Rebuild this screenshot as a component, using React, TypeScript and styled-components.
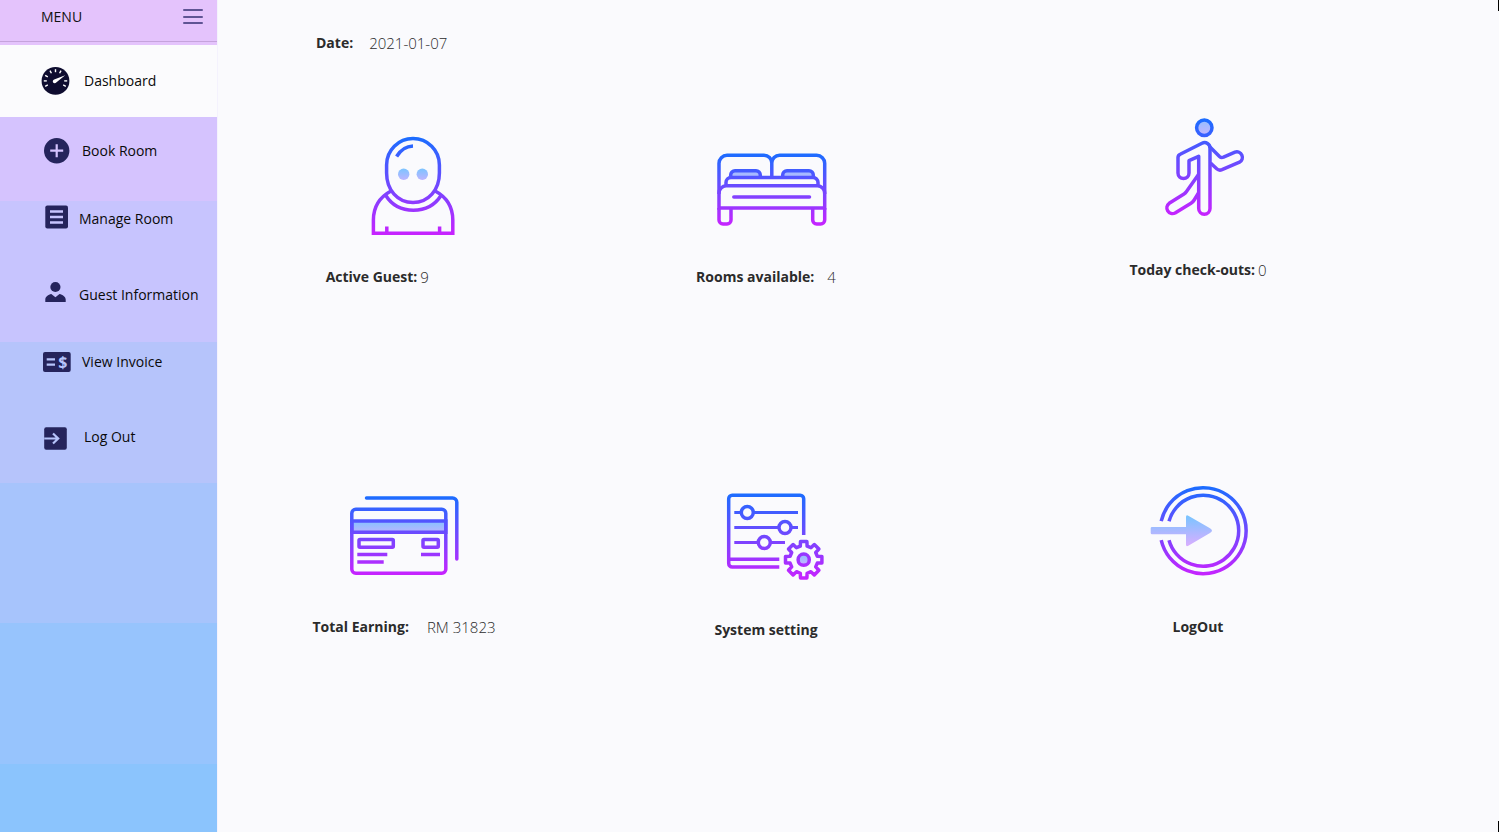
import React from "react";
import styled, { createGlobalStyle } from "styled-components";

const GlobalStyle = createGlobalStyle`
  * { box-sizing: border-box; }
  body {
    margin: 0;
    background: #fafafd;
    font-family: "Segoe UI", "Open Sans", "Noto Sans", sans-serif;
    font-size: 14px;
    line-height: 20px;
    color: #2b2b2b;
  }
`;

const Page = styled.div`
  display: flex;
  min-height: 100vh;
`;

const Sidebar = styled.aside`
  flex: 0 0 218px;
  border-right: 1px solid #f4f2fd;
  background: linear-gradient(
    #e4c3fc 0 60px,
    #d5c3fe 60px 201px,
    #c7c4fe 201px 342px,
    #b6c4fb 342px 483px,
    #a7c4fc 483px 623px,
    #97c4fd 623px 764px,
    #8bc4fd 764px
  );
`;

const SidebarHeader = styled.div`
  display: flex;
  align-items: center;
  justify-content: space-between;
  height: 42px;
  margin-bottom: 3px;
  padding: 0 14px 8px 41px;
  border-bottom: 1px solid #c5a3dc;
  color: #111;
`;

const MenuButton = styled.button`
  display: flex;
  flex-direction: column;
  justify-content: space-between;
  width: 20px;
  height: 15px;
  padding: 0;
  border: 0;
  background: none;
  cursor: pointer;
`;

const MenuLine = styled.span`
  height: 2px;
  border-radius: 1px;
  background: #5f5494;
`;

const NavList = styled.ul`
  margin: 0;
  padding: 0;
  list-style: none;
`;

const NavItem = styled.li<{ $active?: boolean; $space?: number }>`
  margin-top: ${(p) => p.$space ?? 0}px;
  padding: ${(p) => (p.$active ? "22px 0" : "0")};
  background: ${(p) => (p.$active ? "#fbfbfd" : "transparent")};
`;

const NavLink = styled.a<{ $gap: number }>`
  display: flex;
  align-items: center;
  gap: ${(p) => p.$gap}px;
  height: 28px;
  padding-left: 41px;
  color: #0a0a0a;
  text-decoration: none;
  white-space: nowrap;
`;

const NavIcon = styled.svg`
  flex: none;
  width: 30px;
  height: 28px;
  fill: #25245c;
`;

const Main = styled.main`
  position: relative;
  flex: 1;
  min-width: 0;
  padding: 33px 50px 0 5px;

  &::before,
  &::after {
    content: "";
    position: absolute;
    right: 0;
    width: 1px;
    height: 11px;
    background: #000;
  }
  &::before { top: 0; }
  &::after { bottom: 0; }
`;

const DateLine = styled.p`
  display: flex;
  gap: 16px;
  margin: 0 0 57px;
  padding-left: 93px;
`;

const Cards = styled.div`
  display: grid;
  grid-template-columns: 362fr 362fr 502fr;
  grid-template-rows: 370px auto;
`;

const Card = styled.section`
  display: flex;
  flex-direction: column;
  align-items: center;
`;

const Art = styled.svg`
  display: block;
  width: 124px;
  margin-bottom: 26px;
  fill: none;
  stroke-width: 3.5;
`;

const Caption = styled.div<{ $gap?: number }>`
  display: flex;
  gap: ${(p) => p.$gap ?? 0}px;
  white-space: nowrap;
`;

const Label = styled.span`
  font-weight: 700;
`;

const Value = styled.span<{ $reserve?: number }>`
  min-width: ${(p) => p.$reserve ?? 0}px;
  color: #2b2b2b;
  font-size: 15px;
  font-weight: 300;
`;

const PlainLink = styled.a`
  color: inherit;
  font-weight: 700;
  text-decoration: none;
`;

function Gradients({ id, top, bottom, tintTop, tintBottom }: {
  id: string; top: number; bottom: number; tintTop: number; tintBottom: number;
}) {
  return (
    <defs>
      <linearGradient id={`${id}-line`} gradientUnits="userSpaceOnUse" x1="0" x2="0" y1={top} y2={bottom}>
        <stop offset="0" stopColor="#1a6dff" />
        <stop offset="1" stopColor="#c822ff" />
      </linearGradient>
      <linearGradient id={`${id}-tint`} gradientUnits="userSpaceOnUse" x1="0" x2="0" y1={tintTop} y2={tintBottom}>
        <stop offset="0" stopColor="#6dc7ff" />
        <stop offset="1" stopColor="#e6abff" />
      </linearGradient>
    </defs>
  );
}

function GuestArt() {
  return (
    <Art viewBox="0 0 124 131" height="131" stroke="url(#guest-line)" aria-hidden="true">
      <Gradients id="guest" top={27} bottom={125} tintTop={56} tintBottom={77} />
      <path d="M44.600 55a26.400 26.400 0 0 1 52.800 0v8c0 17-11 29.600-26.400 29.600S44.600 80 44.600 63z" />
      <path d="M54.600 46.500C58.600 40 63.600 36.300 71 36" />
      <path d="M49 81c-11 6-17.600 16-17.600 29v13.300h79.400V110c0-13-6.600-23-17.600-29" />
      <path d="M43.800 85.500c6 9.500 16 14.700 27.600 14.700s21.600-5.200 27.600-14.700" />
      <path d="M44.800 116.500v6M97.600 116.500v6" />
      <g fill="url(#guest-tint)" stroke="none">
        <circle cx="61.700" cy="64.300" r="5.700" />
        <circle cx="80.300" cy="64.300" r="5.700" />
      </g>
    </Art>
  );
}

function BedArt() {
  return (
    <Art viewBox="0 0 124 131" height="131" stroke="url(#bed-line)" aria-hidden="true">
      <Gradients id="bed" top={43} bottom={116} tintTop={38} tintBottom={92} />
      <path fill="url(#bed-tint)" d="M26.700 67.500V65a4.300 4.300 0 0 1 4.300-4.300h21a4.300 4.300 0 0 1 4.300 4.300v2.500M78.700 67.500V65a4.300 4.300 0 0 1 4.300-4.300h22a4.300 4.300 0 0 1 4.300 4.300v2.500" />
      <path d="M15 84V53.300a8 8 0 0 1 8-8h37a7.800 7.800 0 0 1 7.800 7.800v14.400V53.100a7.800 7.800 0 0 1 7.800-7.800h37.100a8 8 0 0 1 8 8V84" />
      <path d="M22 75.800v-3.300a5 5 0 0 1 5-5h82a5 5 0 0 1 5 5v3.300" />
      <path d="M15 98V83a7.200 7.200 0 0 1 7.200-7.200h91.300a7.200 7.200 0 0 1 7.200 7.200v15z" />
      <path strokeLinecap="round" d="M29.800 87h75.700" />
      <path d="M15 98v12a4 4 0 0 0 4 4h4a4 4 0 0 0 4-4V98M108.700 98v12a4 4 0 0 0 4 4h4a4 4 0 0 0 4-4V98" />
    </Art>
  );
}

function WalkArt() {
  return (
    <Art viewBox="0 0 124 124" height="124" stroke="url(#walk-line)" strokeLinejoin="round" aria-hidden="true">
      <Gradients id="walk" top={8} bottom={106} tintTop={-2} tintBottom={36} />
      <circle cx="68.300" cy="17.700" r="7.700" fill="url(#walk-tint)" />
      <path d="M62.700 46.300 53 50.700V63a5.500 5.500 0 0 1-11 0V47.500a3.500 3.500 0 0 1 2.200-3.200L66 33.200c4-2 8 1 8 4.800v60.500a5.650 5.650 0 0 1-11.300 0z" />
      <path d="M73.500 36.500 83.500 46.500q1.700 1.600 4 .7L99 42.200a5.500 5.500 0 0 1 4.500 10L86 59.700q-3 1.200-5.300-.9L74.500 53" />
      <path d="M62.500 64.500 50.500 81.500q-1 1.500-2.500 2.400L33.200 93.300a5.700 5.700 0 0 0 5.900 9.700L55 93.200q2-1.200 3.200-3.200l4.300-7" />
    </Art>
  );
}

function EarningArt() {
  return (
    <Art viewBox="0 0 124 111" height="111" stroke="url(#earn-line)" aria-hidden="true">
      <Gradients id="earn" top={16} bottom={95} tintTop={36} tintBottom={62} />
      <path strokeLinecap="round" d="M24.500 18h86a4.300 4.300 0 0 1 4.300 4.300V79" />
      <path fill="url(#earn-tint)" d="M9.800 41h94v11.200h-94z" />
      <rect x="9.800" y="29.300" width="94" height="64" rx="4" />
      <rect x="17" y="59.500" width="34.300" height="7.700" rx="1" />
      <rect x="81" y="59.500" width="15.300" height="7.700" rx="1" />
      <path d="M15.300 74.500h30M79 74.500h19M15.300 82h26.400" />
    </Art>
  );
}

const GEAR = { x: 99.7, y: 79.7, outer: 18.5, inner: 14, teeth: 8 };

function gearPath() {
  const points: string[] = [];
  const at = (radius: number, degrees: number) => {
    const a = (degrees * Math.PI) / 180;
    points.push(`${(GEAR.x + radius * Math.cos(a)).toFixed(1)} ${(GEAR.y + radius * Math.sin(a)).toFixed(1)}`);
  };
  for (let i = 0; i < GEAR.teeth; i++) {
    const mid = (i * 360) / GEAR.teeth;
    at(GEAR.inner, mid - 14);
    at(GEAR.outer, mid - 10);
    at(GEAR.outer, mid + 10);
    at(GEAR.inner, mid + 14);
  }
  return `M${points.join("L")}Z`;
}

function SettingArt() {
  return (
    <Art viewBox="0 0 124 114" height="114" stroke="url(#set-line)" aria-hidden="true">
      <Gradients id="set" top={13} bottom={99} tintTop={68} tintBottom={91} />
      <path d="M75.300 87H28.200a3.500 3.500 0 0 1-3.500-3.500V18.800a3.500 3.500 0 0 1 3.500-3.500h68a3.500 3.500 0 0 1 3.500 3.500V55M24.700 79.300h50.600" />
      <path strokeWidth="3" d="M30.300 32.400h7M49.300 32.400H94M30.300 47.400H75M87 47.400h7M30.300 62.400h24M66.300 62.400H81" />
      <circle cx="43.300" cy="32.400" r="6" />
      <circle cx="81" cy="47.400" r="6" />
      <circle cx="60.300" cy="62.400" r="6" />
      <path strokeLinejoin="round" d={gearPath()} />
      <circle cx={GEAR.x} cy={GEAR.y} r="5.600" fill="url(#set-tint)" />
    </Art>
  );
}

function LogoutArt() {
  return (
    <Art viewBox="0 0 124 111" height="111" stroke="url(#out-line)" aria-hidden="true">
      <Gradients id="out" top={6} bottom={96} tintTop={32} tintBottom={70} />
      <path d="M25.200 41.200a43 43 0 1 1 0 19" />
      <path d="M33 41.200a35.500 35.500 0 1 1 0 19" />
      <path
        fill="url(#out-tint)"
        stroke="none"
        d="M16 47h34V37q0-2.500 2.300-1.300L74 48.300q4 2.400 0 4.800L52.300 65.700Q50 67 50 64.500V54.300H16q-1.300 0-1.300-1.300v-4.700Q14.700 47 16 47z"
      />
    </Art>
  );
}

const GAUGE_TICKS = [-28, 0, 62, 90, 118, 152, 180, 208];

function DashboardIcon() {
  return (
    <NavIcon viewBox="0 0 30 28" aria-hidden="true">
      <circle cx="14.500" cy="13.900" r="13.900" fill="#0e0c2f" />
      {GAUGE_TICKS.map((t) => (
        <path key={t} d="M23.200 13.900h3" stroke="#fff" strokeWidth="1.400" transform={`rotate(${-t} 14.500 13.900)`} />
      ))}
      <path d="M24.200 8.200 13.200 12.500a1.900 1.900 0 1 0 2 3z" fill="#fff" />
    </NavIcon>
  );
}

function BookIcon() {
  return (
    <NavIcon viewBox="0 0 30 28" aria-hidden="true">
      <circle cx="15.700" cy="13.700" r="12.700" />
      <path d="M9.200 13.700h13M15.700 7.200v13" stroke="#d5c3fe" strokeWidth="2.200" />
    </NavIcon>
  );
}

function ManageIcon() {
  return (
    <NavIcon viewBox="0 0 30 28" aria-hidden="true">
      <rect x="4.300" y=".6" width="22.700" height="23" rx="2" />
      <path d="M9 6.500h13M9 12h13M9 17.500h13" stroke="#c7c4fe" strokeWidth="2.300" />
    </NavIcon>
  );
}

function GuestIcon() {
  return (
    <NavIcon viewBox="0 0 30 28" aria-hidden="true">
      <circle cx="14.400" cy="6" r="5.100" />
      <path d="M4.300 21v-2.500c0-3 3-4.800 6-5.500l4.100 3.300 4.100-3.300c3 .7 6.200 2.500 6.200 5.500V21z" />
    </NavIcon>
  );
}

function InvoiceIcon() {
  return (
    <NavIcon viewBox="0 0 30 28" aria-hidden="true">
      <rect x="2" y="4" width="27.700" height="20" rx="2" />
      <path d="M5.700 11.300H14M5.700 16.700H14" stroke="#b6c4fb" strokeWidth="2.200" />
      <text x="21.900" y="19.600" textAnchor="middle" fontSize="16" fontWeight="700" fill="#b6c4fb">$</text>
    </NavIcon>
  );
}

function LogoutIcon() {
  return (
    <NavIcon viewBox="0 0 30 28" aria-hidden="true">
      <rect x="3.200" y="4.200" width="22.600" height="22.600" rx="2" />
      <path d="M3.200 15.500H17M12 10.500l5.200 5-5.200 5" fill="none" stroke="#b6c4fb" strokeWidth="2.200" />
    </NavIcon>
  );
}

const NAV = [
  { label: "Dashboard", icon: DashboardIcon, gap: 13, space: 0, active: true },
  { label: "Book Room", icon: BookIcon, gap: 11, space: 20 },
  { label: "Manage Room", icon: ManageIcon, gap: 8, space: 40 },
  { label: "Guest Information", icon: GuestIcon, gap: 8, space: 48 },
  { label: "View Invoice", icon: InvoiceIcon, gap: 11, space: 39 },
  { label: "Log Out", icon: LogoutIcon, gap: 13, space: 47 },
];

export default function App() {
  return (
    <>
      <GlobalStyle />
      <Page>
        <Sidebar>
          <SidebarHeader>
            <span>MENU</span>
            <MenuButton type="button" aria-label="Toggle menu">
              <MenuLine />
              <MenuLine />
              <MenuLine />
            </MenuButton>
          </SidebarHeader>
          <nav>
            <NavList>
              {NAV.map(({ label, icon: Icon, gap, space, active }) => (
                <NavItem key={label} $active={active} $space={space}>
                  <NavLink href="#" $gap={gap} aria-current={active ? "page" : undefined}>
                    <Icon />
                    {label}
                  </NavLink>
                </NavItem>
              ))}
            </NavList>
          </nav>
        </Sidebar>
        <Main>
          <DateLine>
            <Label>Date:</Label>
            <Value>2021-01-07</Value>
          </DateLine>
          <Cards>
            <Card>
              <GuestArt />
              <Caption $gap={3}>
                <Label>Active Guest:</Label>
                <Value $reserve={62}>9</Value>
              </Caption>
            </Card>
            <Card>
              <BedArt />
              <Caption $gap={13}>
                <Label>Rooms available:</Label>
                <Value>4</Value>
              </Caption>
            </Card>
            <Card>
              <WalkArt />
              <Caption $gap={3}>
                <Label>Today check-outs:</Label>
                <Value>0</Value>
              </Caption>
            </Card>
            <Card>
              <EarningArt />
              <Caption $gap={18}>
                <Label>Total Earning:</Label>
                <Value>RM 31823</Value>
              </Caption>
            </Card>
            <Card>
              <SettingArt />
              <Caption>
                <PlainLink href="#">System setting</PlainLink>
              </Caption>
            </Card>
            <Card>
              <LogoutArt />
              <Caption>
                <PlainLink href="#">LogOut</PlainLink>
              </Caption>
            </Card>
          </Cards>
        </Main>
      </Page>
    </>
  );
}
